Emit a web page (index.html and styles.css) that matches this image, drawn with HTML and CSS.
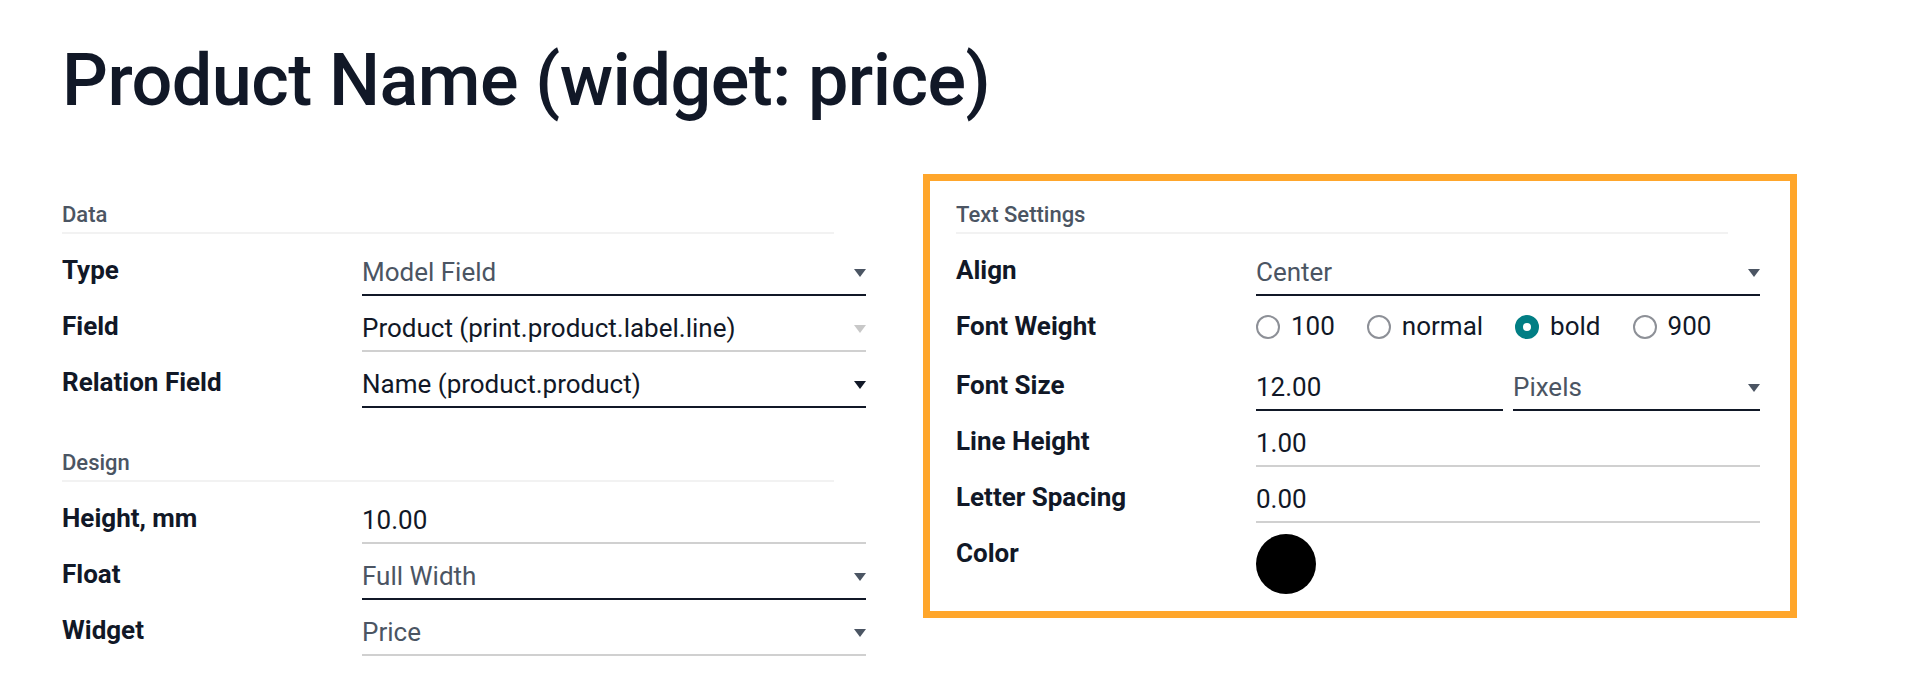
FILE: index.html
```html
<!DOCTYPE html>
<html lang="en">
<head>
<meta charset="utf-8">
<title>Product Name (widget: price)</title>
<link rel="stylesheet" href="styles.css">
</head>
<body>
<div class="page">
  <h1 class="title">Product Name (widget: price)</h1>
  <div class="columns">
    <div class="col-left">
      <div class="section">
        <div class="sep">Data</div>
        <div class="row">
          <div class="lbl">Type</div>
          <div class="field dark"><span class="val muted">Model Field</span><span class="caret"></span></div>
        </div>
        <div class="row">
          <div class="lbl">Field</div>
          <div class="field"><span class="val">Product (print.product.label.line)</span><span class="caret light"></span></div>
        </div>
        <div class="row">
          <div class="lbl">Relation Field</div>
          <div class="field dark"><span class="val">Name (product.product)</span><span class="caret darkc"></span></div>
        </div>
      </div>
      <div class="section">
        <div class="sep">Design</div>
        <div class="row">
          <div class="lbl">Height, mm</div>
          <div class="field"><span class="val">10.00</span></div>
        </div>
        <div class="row">
          <div class="lbl">Float</div>
          <div class="field dark"><span class="val muted">Full Width</span><span class="caret"></span></div>
        </div>
        <div class="row">
          <div class="lbl">Widget</div>
          <div class="field"><span class="val muted">Price</span><span class="caret"></span></div>
        </div>
      </div>
    </div>
    <div class="box">
      <div class="section">
        <div class="sep">Text Settings</div>
        <div class="row">
          <div class="lbl">Align</div>
          <div class="field dark"><span class="val muted">Center</span><span class="caret"></span></div>
        </div>
        <div class="row">
          <div class="lbl">Font Weight</div>
          <div class="radios">
            <div class="radio"><span class="dot"></span><span class="rtext">100</span></div>
            <div class="radio"><span class="dot"></span><span class="rtext">normal</span></div>
            <div class="radio"><span class="dot on"></span><span class="rtext">bold</span></div>
            <div class="radio"><span class="dot"></span><span class="rtext">900</span></div>
          </div>
        </div>
        <div class="row">
          <div class="lbl">Font Size</div>
          <div class="split">
            <div class="field dark"><span class="val">12.00</span></div>
            <div class="field dark"><span class="val muted">Pixels</span><span class="caret"></span></div>
          </div>
        </div>
        <div class="row">
          <div class="lbl">Line Height</div>
          <div class="field"><span class="val">1.00</span></div>
        </div>
        <div class="row">
          <div class="lbl">Letter Spacing</div>
          <div class="field"><span class="val">0.00</span></div>
        </div>
        <div class="row">
          <div class="lbl">Color</div>
          <div class="swatch-wrap"><span class="swatch"></span></div>
        </div>
      </div>
    </div>
  </div>
</div>
</body>
</html>
```

FILE: styles.css
```css
* { box-sizing: border-box; }

body {
  margin: 0;
  background: #ffffff;
  font-family: Roboto, "Noto Sans", "Liberation Sans", sans-serif;
  color: #111827;
}

.page {
  padding: 38px 0 0 62px;
}

.title {
  margin: 0;
  font-size: 72px;
  line-height: 86px;
  font-weight: 500;
  letter-spacing: -0.55px;
  color: #111827;
}

.columns {
  display: flex;
  align-items: flex-start;
  gap: 57px;
  margin-top: 50px;
}

.col-left {
  width: 804px;
  padding-top: 24px;
}

.box {
  width: 874px;
  border: 7px solid #ffa62b;
  padding: 17px 30px 8px 26px;
}

.section + .section {
  margin-top: 38px;
}

.sep {
  font-size: 22px;
  font-weight: 500;
  line-height: 33px;
  color: #4b5563;
  padding-bottom: 1px;
  border-bottom: 2px solid #f2f2f2;
  margin-right: 32px;
  margin-bottom: 15px;
}

.row {
  display: grid;
  grid-template-columns: 300px 1fr;
  align-items: start;
  margin-bottom: 9px;
}

.lbl {
  font-size: 26px;
  font-weight: 700;
  line-height: 39px;
  padding-top: 2px;
  color: #111827;
}

.field {
  display: flex;
  align-items: center;
  font-size: 26px;
  line-height: 39px;
  padding: 4px 0 2px;
  border-bottom: 2px solid #d0d0d0;
  min-width: 0;
}

.field.dark {
  border-bottom-color: #111827;
}

.val {
  white-space: nowrap;
  color: #111827;
}

.val.muted {
  color: #4b5563;
}

.caret {
  margin-left: auto;
  width: 0;
  height: 0;
  border-left: 6.5px solid transparent;
  border-right: 6.5px solid transparent;
  border-top: 8px solid #4b5563;
}

.caret.light {
  border-top-color: #c8c8c8;
}

.caret.darkc {
  border-top-color: #111827;
}

.split {
  display: flex;
  gap: 10px;
}

.split .field {
  flex: 1;
}

.radios {
  display: flex;
  align-items: flex-start;
  padding-top: 2px;
  height: 50px;
}

.radio {
  display: flex;
  align-items: center;
  height: 39px;
  margin-right: 32px;
  font-size: 26px;
  line-height: 39px;
  color: #111827;
}

.dot {
  width: 24px;
  height: 24px;
  border-radius: 50%;
  border: 2px solid #8d9097;
  margin-right: 11px;
  flex: none;
}

.dot.on {
  border: 8px solid #017e84;
  background: #ffffff;
}

.swatch-wrap {
  padding-top: 2px;
}

.swatch {
  display: block;
  width: 60px;
  height: 60px;
  border-radius: 50%;
  background: #000000;
}
```
